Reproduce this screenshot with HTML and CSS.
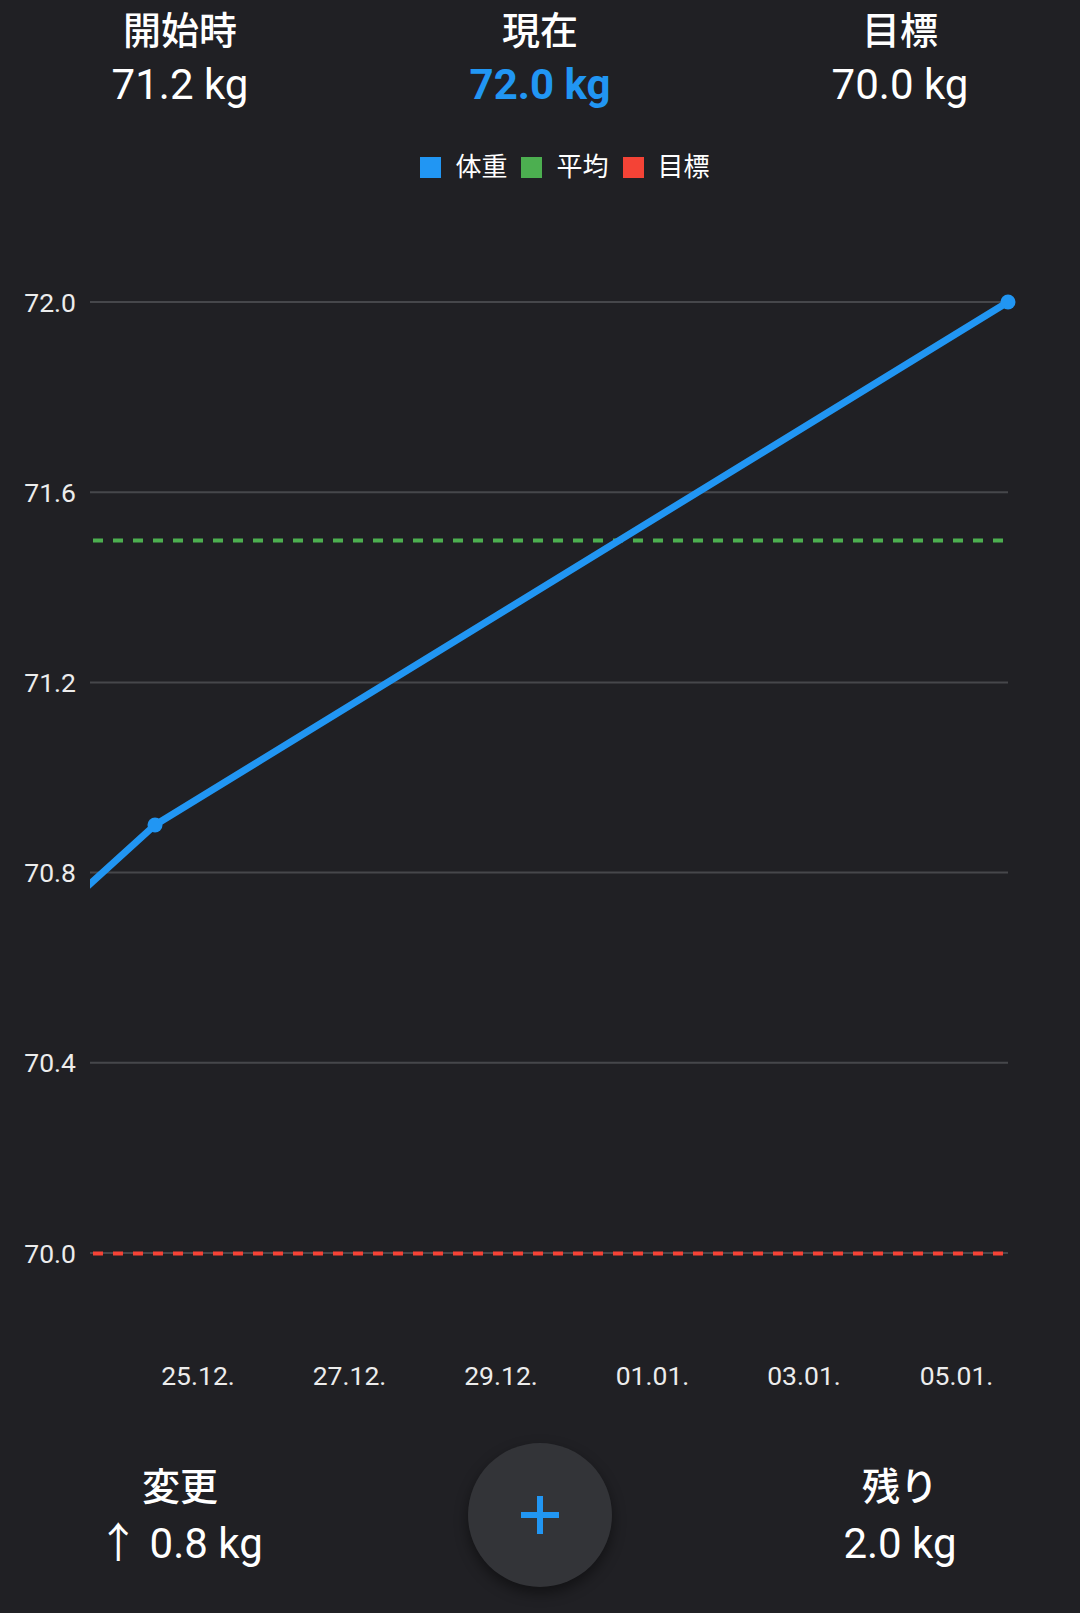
FILE: index.html
```html
<!DOCTYPE html>
<html lang="ja">
<head>
<meta charset="utf-8">
<title>体重</title>
<link rel="stylesheet" href="styles.css">
</head>
<body>
<div class="screen">
  <header class="stats">
    <div class="stat">
      <div class="stat-label">開始時</div>
      <div class="stat-value">71.2 kg</div>
    </div>
    <div class="stat">
      <div class="stat-label">現在</div>
      <div class="stat-value current">72.0 kg</div>
    </div>
    <div class="stat">
      <div class="stat-label">目標</div>
      <div class="stat-value">70.0 kg</div>
    </div>
  </header>

  <div class="legend">
    <span class="legend-item"><i class="swatch swatch-blue"></i>体重</span>
    <span class="legend-item"><i class="swatch swatch-green"></i>平均</span>
    <span class="legend-item"><i class="swatch swatch-red"></i>目標</span>
  </div>

  <svg class="chart" width="1080" height="1243" viewBox="0 187 1080 1243" xmlns="http://www.w3.org/2000/svg">
    <defs>
      <clipPath id="plot-clip">
        <rect x="90" y="187" width="990" height="1243"></rect>
      </clipPath>
    </defs>
    <g class="grid">
      <line x1="90" y1="302" x2="1008" y2="302"></line>
      <line x1="90" y1="492.2" x2="1008" y2="492.2"></line>
      <line x1="90" y1="682.4" x2="1008" y2="682.4"></line>
      <line x1="90" y1="872.6" x2="1008" y2="872.6"></line>
      <line x1="90" y1="1062.8" x2="1008" y2="1062.8"></line>
      <line x1="90" y1="1253" x2="1008" y2="1253"></line>
    </g>
    <g class="y-labels">
      <text x="76" y="311.5">72.0</text>
      <text x="76" y="501.7">71.6</text>
      <text x="76" y="691.9">71.2</text>
      <text x="76" y="882.1">70.8</text>
      <text x="76" y="1072.3">70.4</text>
      <text x="76" y="1262.5">70.0</text>
    </g>
    <line class="avg-line" x1="90" y1="540.5" x2="1008" y2="540.5"></line>
    <line class="goal-line" x1="90" y1="1253.5" x2="1008" y2="1253.5"></line>
    <g clip-path="url(#plot-clip)">
      <polyline class="weight-line" points="20,947.5 155,825 1008,302"></polyline>
    </g>
    <circle class="weight-point" cx="155" cy="825" r="7.5"></circle>
    <circle class="weight-point" cx="1008" cy="302" r="7.5"></circle>
    <g class="x-labels">
      <text x="198" y="1384.5">25.12.</text>
      <text x="349.5" y="1384.5">27.12.</text>
      <text x="501" y="1384.5">29.12.</text>
      <text x="652.5" y="1384.5">01.01.</text>
      <text x="804" y="1384.5">03.01.</text>
      <text x="956.5" y="1384.5">05.01.</text>
    </g>
  </svg>

  <footer class="summary">
    <div class="stat">
      <div class="stat-label">変更</div>
      <div class="stat-value">↑ 0.8 kg</div>
    </div>
    <div class="fab-cell">
      <button class="fab" type="button" aria-label="追加">
        <svg width="38" height="38" viewBox="0 0 38 38" xmlns="http://www.w3.org/2000/svg">
          <path d="M19 0V38M0 19H38" stroke="#2196f3" stroke-width="6" fill="none"></path>
        </svg>
      </button>
    </div>
    <div class="stat">
      <div class="stat-label">残り</div>
      <div class="stat-value">2.0 kg</div>
    </div>
  </footer>
</div>
</body>
</html>
```

FILE: styles.css
```css
* {
  box-sizing: border-box;
}

html, body {
  margin: 0;
  padding: 0;
  background: #202024;
}

body {
  font-family: Roboto, "Noto Sans CJK JP", sans-serif;
  color: #ffffff;
}

.screen {
  width: 1080px;
  height: 1613px;
  overflow: hidden;
  background: #202024;
}

.stats {
  display: grid;
  grid-template-columns: repeat(3, 360px);
  padding-top: 8px;
}

.stat {
  display: flex;
  flex-direction: column;
  align-items: center;
  text-align: center;
}

.stat-label {
  font-size: 38px;
  line-height: 46px;
  font-weight: 500;
  color: #ffffff;
}

.stat-value {
  margin-top: 6px;
  font-size: 42px;
  line-height: 50px;
  font-weight: 400;
  color: #ffffff;
  white-space: nowrap;
}

.stat-value.current {
  color: #2196f3;
  font-weight: 700;
}

.legend {
  margin-top: 42px;
  margin-bottom: 5px;
  height: 30px;
  display: flex;
  justify-content: center;
  align-items: center;
  gap: 14px;
  padding-left: 50px;
  font-size: 26px;
  line-height: 30px;
  color: #ffffff;
}

.legend-item {
  display: flex;
  align-items: center;
  gap: 14px;
}

.swatch {
  display: block;
  width: 21px;
  height: 21px;
}

.swatch-blue { background: #2196f3; }
.swatch-green { background: #4caf50; }
.swatch-red { background: #f44336; }

.chart {
  display: block;
}

.grid line {
  stroke: #46474b;
  stroke-width: 2;
}

.y-labels text {
  font-family: Roboto, sans-serif;
  font-size: 26.5px;
  fill: #ececec;
  text-anchor: end;
}

.x-labels text {
  font-family: Roboto, sans-serif;
  font-size: 26.5px;
  fill: #ececec;
  text-anchor: middle;
}

.avg-line {
  stroke: #4caf50;
  stroke-width: 4;
  stroke-dasharray: 10 10;
  stroke-dashoffset: -3;
}

.goal-line {
  stroke: #f44336;
  stroke-width: 4;
  stroke-dasharray: 10 10;
  stroke-dashoffset: -3;
}

.weight-line {
  fill: none;
  stroke: #2196f3;
  stroke-width: 7;
  stroke-linejoin: round;
}

.weight-point {
  fill: #2196f3;
}

.summary {
  display: grid;
  grid-template-columns: repeat(3, 360px);
  height: 183px;
  align-items: start;
}

.summary .stat {
  margin-top: 34px;
}

.summary .stat-value {
  margin-top: 9px;
}

.fab-cell {
  display: flex;
  justify-content: center;
  padding-top: 13px;
}

.fab {
  width: 144px;
  height: 144px;
  border-radius: 50%;
  border: none;
  padding: 0;
  background: #333438;
  box-shadow: 0 6px 14px rgba(0, 0, 0, 0.45);
  display: flex;
  align-items: center;
  justify-content: center;
}
```
